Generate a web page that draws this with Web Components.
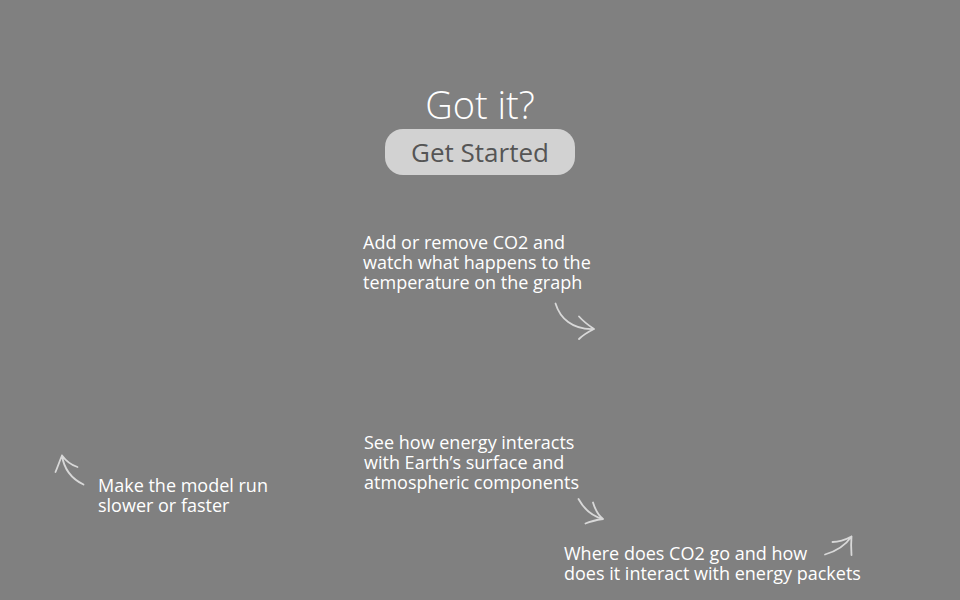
<!DOCTYPE html>
<html lang="en">
<head>
<meta charset="utf-8">
<title>Carbon model guide</title>
<style>
html, body { margin: 0; min-height: 100%; background: #808080; }
body { font-family: "Open Sans", "Noto Sans", sans-serif; color: #fff; }
</style>
</head>
<body>
<guide-overlay>
  <start-panel slot="start" heading="Got it?">Get Started</start-panel>
  <guide-hint style="--x:-117px;--y:232px">Add or remove CO2 and<br>watch what happens to the<br>temperature on the graph</guide-hint>
  <guide-arrow kind="graph" style="--x:70px;--y:298px"></guide-arrow>
  <guide-hint style="--x:-116px;--y:432px">See how energy interacts<br>with Earth’s surface and<br>atmospheric components</guide-hint>
  <guide-arrow kind="energy" style="--x:90px;--y:490px"></guide-arrow>
  <guide-hint style="--x:-382px;--y:475px">Make the model run<br>slower or faster</guide-hint>
  <guide-arrow kind="speed" style="--x:-430px;--y:450px"></guide-arrow>
  <guide-hint style="--x:84px;--y:543px">Where does CO2 go and how<br>does it interact with energy packets</guide-hint>
  <guide-arrow kind="carbon" style="--x:340px;--y:530px"></guide-arrow>
</guide-overlay>
<script>
class GuideOverlay extends HTMLElement {
  constructor() {
    super();
    this.attachShadow({ mode: 'open' }).innerHTML = `
      <style>
        :host { display: block; position: relative; min-height: 100vh; overflow: hidden; background: #808080; }
        main { display: flex; flex-direction: column; align-items: center; padding-top: 80px; }
        ::slotted(guide-hint), ::slotted(guide-arrow) { position: absolute; left: calc(50% + var(--x)); top: var(--y); }
      </style>
      <main><slot name="start"></slot></main>
      <slot></slot>`;
  }
}
class StartPanel extends HTMLElement {
  constructor() {
    super();
    this.attachShadow({ mode: 'open' }).innerHTML = `
      <style>
        :host { display: flex; flex-direction: column; align-items: center; gap: 1px; }
        h1 { margin: 0; font-size: 38px; line-height: 48px; font-weight: 300; }
        button { font: 500 26px/46px "Open Sans", "Noto Sans", sans-serif; color: #555; background: #d2d2d2;
          border: 0; border-radius: 18px; padding: 0 24px; min-width: 190px; cursor: pointer; }
      </style>
      <h1></h1>
      <button type="button"><slot></slot></button>`;
    this.shadowRoot.querySelector('h1').textContent = this.getAttribute('heading');
  }
}
class GuideHint extends HTMLElement {
  constructor() {
    super();
    this.attachShadow({ mode: 'open' }).innerHTML = `
      <style>
        :host { display: block; }
        p { margin: 0; font-size: 18px; line-height: 20px; white-space: nowrap; }
      </style>
      <p><slot></slot></p>`;
  }
}
const ARROWS = {
  graph: [50, 46, 'M5.5 5.5C10 20 22 32 44 31M29 18.5C33 23 38 27 44 31C38 34 33 37 29 41'],
  energy: [40, 40, 'M8.5 9C14 19 21 26 33 29M23 12.5C25 19 28 25 33 29C26 30 20 31.5 15.5 33.5'],
  speed: [40, 40, 'M33.5 34.5C22 29 14 19 12 5.5M5.5 22C8 16 10 10 12 5.5C16 11 21 15 27.5 17'],
  carbon: [40, 30, 'M5 24.5C17 21 25 16 31.5 6.5M12.5 12C19 12 25 10 31.5 6.5C31 12 31 18 31.5 25']
};
class GuideArrow extends HTMLElement {
  constructor() {
    super();
    const [w, h, d] = ARROWS[this.getAttribute('kind')];
    this.attachShadow({ mode: 'open' }).innerHTML = `
      <style>
        :host { display: block; }
        svg { display: block; }
        path { fill: none; stroke: #d8d8d8; stroke-width: 1.8; stroke-linecap: round; stroke-linejoin: round; }
      </style>
      <svg width="${w}" height="${h}" viewBox="0 0 ${w} ${h}" aria-hidden="true"><path d="${d}"/></svg>`;
  }
}
customElements.define('guide-overlay', GuideOverlay);
customElements.define('start-panel', StartPanel);
customElements.define('guide-hint', GuideHint);
customElements.define('guide-arrow', GuideArrow);
</script>
</body>
</html>
